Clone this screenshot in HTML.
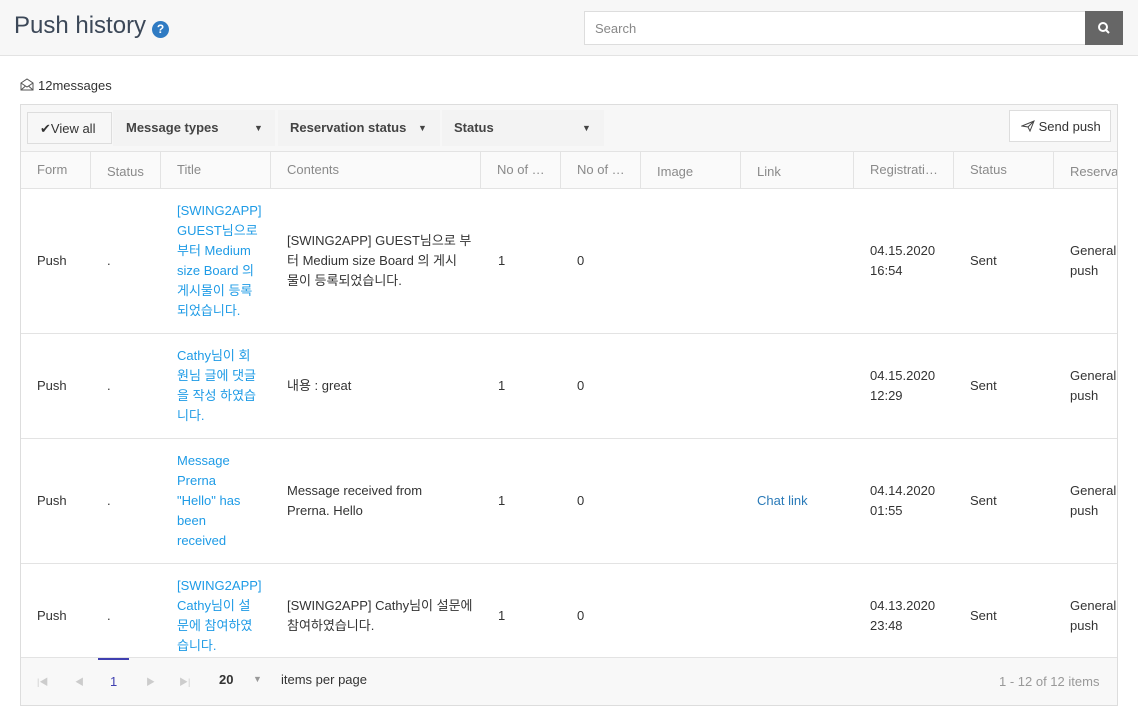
<!DOCTYPE html>
<html><head><meta charset="utf-8"><style>
*{box-sizing:border-box;margin:0;padding:0}
body{width:1138px;height:707px;overflow:hidden;background:#fff;font-family:"Liberation Sans","Noto Sans CJK KR",sans-serif;font-size:13px;color:#333;position:relative}
.a{position:absolute;white-space:nowrap}
.hdr{position:absolute;left:0;top:0;width:1138px;height:56px;background:#f7f7f7;border-bottom:1px solid #e3e3e3}
.grid{position:absolute;left:20px;top:104px;width:1098px;height:602px;border:1px solid #ddd;overflow:hidden}
.tb{position:absolute;left:0;top:0;width:100%;height:47px;background:#f7f7f7;border-bottom:1px solid #e3e3e3}
.th{position:absolute;top:47px;height:37px;border-right:1px solid #e3e3e3;border-bottom:1px solid #e3e3e3;background:#fafafa;color:#8a8a8a;padding:10px 0 0 16px;white-space:nowrap;overflow:hidden}
.row{position:absolute;left:0;width:100%;border-bottom:1px solid #e3e3e3}
.c{position:absolute;line-height:20px;white-space:nowrap}
.t{color:#1e9be6}
.ar{position:absolute;top:13px;font-size:9px;font-weight:normal}
.pg{position:absolute;left:0;top:552px;width:100%;height:50px;background:#f8f8f8;border-top:1px solid #e3e3e3}
</style></head><body>
<div class="hdr">
<div class="a" style="left:14px;top:12px;font-size:24px;color:#3c4858">Push history</div>
<div class="a" style="left:152px;top:21px;width:17px;height:17px;border-radius:50%;background:#2f7bc3;color:#fff;font-size:12px;font-weight:bold;text-align:center;line-height:17px">?</div>
<div class="a" style="left:584px;top:11px;width:502px;height:34px;background:#fff;border:1px solid #ddd;color:#888;padding:9px 10px;font-size:13px">Search</div>
<div class="a" style="left:1085px;top:11px;width:38px;height:34px;background:#666">
<svg width="38" height="34"><circle cx="18" cy="16" r="4" stroke="#fff" stroke-width="2" fill="none"/><line x1="21" y1="19" x2="24" y2="22" stroke="#fff" stroke-width="2"/></svg></div>
</div>
<svg class="a" style="left:20px;top:78px" width="14" height="13"><path d="M1 5 L7 1 L13 5 V12 H1 Z M1 5 L7 9 L13 5 M1 12 L5.5 8 M13 12 L8.5 8" stroke="#555" fill="none" stroke-width="1"/></svg>
<div class="a" style="left:38px;top:78px;color:#333">12messages</div>
<div class="grid">
<div class="tb">
<div class="a" style="left:6px;top:7px;width:85px;height:32px;border:1px solid #ddd;background:#f7f7f7;padding:8px 0 0 12px">✔View all</div>
<div class="a" style="left:92px;top:5px;width:162px;height:36px;background:#f3f3f3;padding:10px 0 0 13px;font-weight:bold;color:#444">Message types<span class="ar" style="left:141px">▼</span></div>
<div class="a" style="left:257px;top:5px;width:162px;height:36px;background:#f3f3f3;padding:10px 0 0 12px;font-weight:bold;color:#444">Reservation status<span class="ar" style="left:140px">▼</span></div>
<div class="a" style="left:421px;top:5px;width:162px;height:36px;background:#f3f3f3;padding:10px 0 0 12px;font-weight:bold;color:#444">Status<span class="ar" style="left:140px">▼</span></div>
<div class="a" style="left:988px;top:5px;width:102px;height:32px;border:1px solid #ddd;background:#fff;padding:8px 0 0 11px;color:#333;font-size:13px"><svg width="14" height="12" style="vertical-align:-1px"><path d="M1 6 L13 1 L9 11 L7 7 Z M7 7 L13 1" stroke="#444" fill="none"/></svg> Send push</div>
</div>
<div class="th" style="left:0;width:70px">Form</div>
<div class="th" style="left:70px;width:70px;padding-top:12px">Status</div>
<div class="th" style="left:140px;width:110px">Title</div>
<div class="th" style="left:250px;width:210px">Contents</div>
<div class="th" style="left:460px;width:80px">No of …</div>
<div class="th" style="left:540px;width:80px">No of …</div>
<div class="th" style="left:620px;width:100px;padding-top:12px">Image</div>
<div class="th" style="left:720px;width:113px;padding-top:12px">Link</div>
<div class="th" style="left:833px;width:100px">Registrati…</div>
<div class="th" style="left:933px;width:100px">Status</div>
<div class="th" style="left:1033px;width:70px;padding-top:12px">Reserva</div>

<div class="row" style="top:84px;height:145px">
<div class="c" style="left:16px;top:62px">Push</div><div class="c" style="left:86px;top:62px">.</div>
<div class="c t" style="left:156px;top:12px">[SWING2APP]<br>GUEST님으로<br>부터 Medium<br>size Board 의<br>게시물이 등록<br>되었습니다.</div>
<div class="c" style="left:266px;top:42px">[SWING2APP] GUEST님으로 부<br>터 Medium size Board 의 게시<br>물이 등록되었습니다.</div>
<div class="c" style="left:477px;top:62px">1</div><div class="c" style="left:556px;top:62px">0</div>
<div class="c" style="left:849px;top:52px">04.15.2020<br>16:54</div><div class="c" style="left:949px;top:62px">Sent</div><div class="c" style="left:1049px;top:52px">General<br>push</div>
</div>
<div class="row" style="top:229px;height:105px">
<div class="c" style="left:16px;top:42px">Push</div><div class="c" style="left:86px;top:42px">.</div>
<div class="c t" style="left:156px;top:12px">Cathy님이 회<br>원님 글에 댓글<br>을 작성 하였습<br>니다.</div>
<div class="c" style="left:266px;top:42px">내용 : great</div>
<div class="c" style="left:477px;top:42px">1</div><div class="c" style="left:556px;top:42px">0</div>
<div class="c" style="left:849px;top:32px">04.15.2020<br>12:29</div><div class="c" style="left:949px;top:42px">Sent</div><div class="c" style="left:1049px;top:32px">General<br>push</div>
</div>
<div class="row" style="top:334px;height:125px">
<div class="c" style="left:16px;top:52px">Push</div><div class="c" style="left:86px;top:52px">.</div>
<div class="c t" style="left:156px;top:12px">Message<br>Prerna<br>"Hello" has<br>been<br>received</div>
<div class="c" style="left:266px;top:42px">Message received from<br>Prerna. Hello</div>
<div class="c" style="left:477px;top:52px">1</div><div class="c" style="left:556px;top:52px">0</div>
<div class="c t" style="left:736px;top:52px;color:#2a7ab8">Chat link</div>
<div class="c" style="left:849px;top:42px">04.14.2020<br>01:55</div><div class="c" style="left:949px;top:52px">Sent</div><div class="c" style="left:1049px;top:42px">General<br>push</div>
</div>
<div class="row" style="top:459px;height:125px;border:none">
<div class="c" style="left:16px;top:42px">Push</div><div class="c" style="left:86px;top:42px">.</div>
<div class="c t" style="left:156px;top:12px">[SWING2APP]<br>Cathy님이 설<br>문에 참여하였<br>습니다.</div>
<div class="c" style="left:266px;top:32px">[SWING2APP] Cathy님이 설문에<br>참여하였습니다.</div>
<div class="c" style="left:477px;top:42px">1</div><div class="c" style="left:556px;top:42px">0</div>
<div class="c" style="left:849px;top:32px">04.13.2020<br>23:48</div><div class="c" style="left:949px;top:42px">Sent</div><div class="c" style="left:1049px;top:32px">General<br>push</div>
</div>
<div class="pg">
<div class="a" style="left:77px;top:0;width:31px;height:2px;background:#3f3fb0"></div>
<div class="a" style="left:16px;top:17px;color:#ccc;font-size:9px">|◀</div>
<div class="a" style="left:54px;top:17px;color:#ccc;font-size:9px">◀</div>
<div class="a" style="left:89px;top:16px;color:#3f3fb0">1</div>
<div class="a" style="left:125px;top:17px;color:#ccc;font-size:9px">▶</div>
<div class="a" style="left:158px;top:17px;color:#ccc;font-size:9px">▶|</div>
<div class="a" style="left:198px;top:14px;font-weight:bold;color:#333">20</div>
<div class="a" style="left:232px;top:16px;color:#999;font-size:9px">▼</div>
<div class="a" style="left:260px;top:14px;color:#333">items per page</div>
<div class="a" style="left:978px;top:16px;color:#999">1 - 12 of 12 items</div>
</div>
</div>
</body></html>
